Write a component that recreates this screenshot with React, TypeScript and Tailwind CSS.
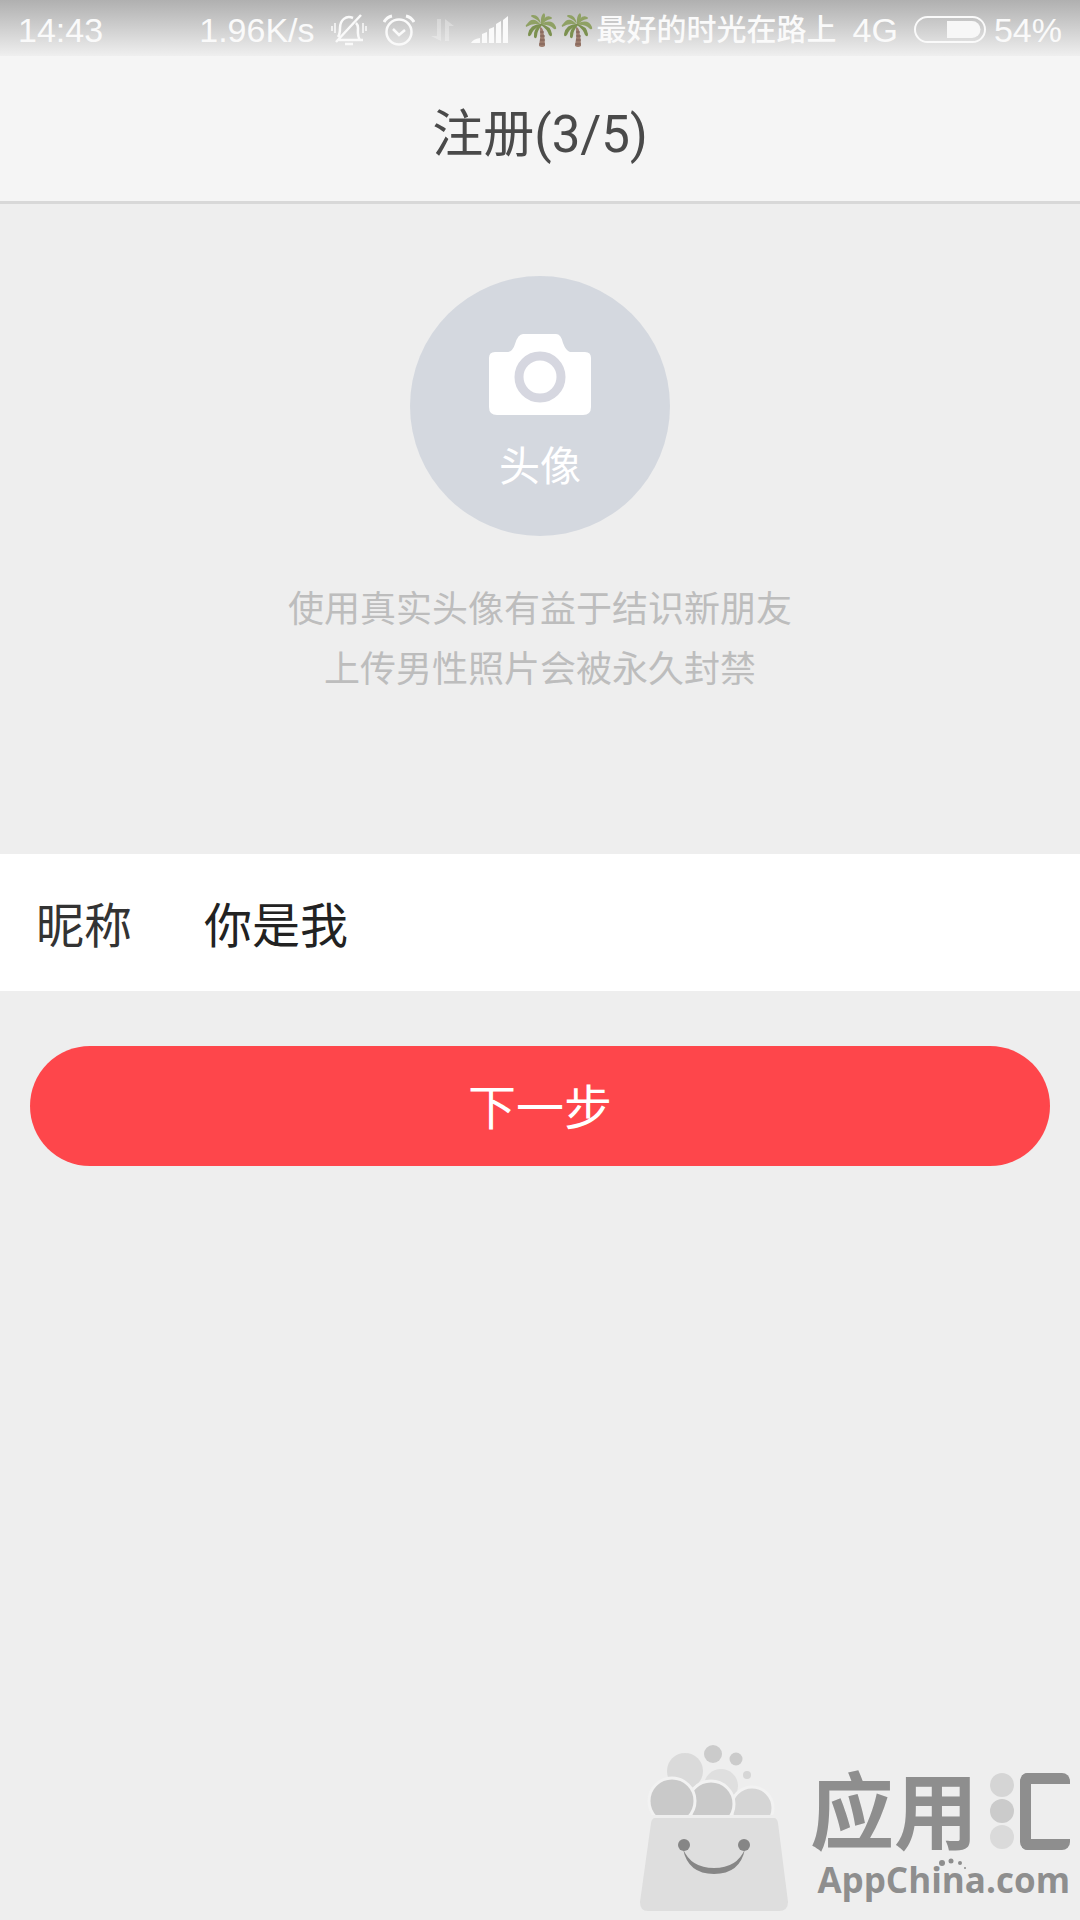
import React, { useState } from 'react';

const PalmIcon = () => (
    <svg viewBox="0 0 32 36" className="w-8 h-9" aria-hidden="true">
        <path d="M15 15 Q17 15 18 18 Q20 26 20 34 Q17 36 14 34 Q16 25 15 15Z" fill="#9c7b6c" />
        <path d="M15 20h4M15 24h5M15 28h5M14 32h6" stroke="#7d5f55" strokeWidth="1" />
        <g fill="#8fa164">
            <path d="M16 13 Q8 3 2 12 Q0 13 1 15 Q9 10 16 13Z" />
            <path d="M16 12 Q14 2 7 3 Q5 4 7 5 Q12 7 16 12Z" />
            <path d="M16 12 Q15 4 19 1 Q22 4 17 12Z" />
            <path d="M16 12 Q20 2 26 5 Q28 6 26 7 Q20 8 17 13Z" />
            <path d="M16 12 Q27 6 31 15 Q32 18 29 17 Q24 12 16 13Z" />
        </g>
        <g fill="#7c9150">
            <path d="M16 12 Q5 12 3 22 Q3 26 6 23 Q8 17 16 13Z" />
            <path d="M16 12 Q8 17 9 25 Q11 28 12 24 Q12 19 17 13Z" />
            <path d="M16 12 Q26 14 27 22 Q27 26 24 23 Q22 17 16 13Z" />
        </g>
    </svg>
);

const BellOffIcon = () => (
    <svg viewBox="0 0 36 32" className="w-9 h-8" fill="none" stroke="#fafafa" strokeWidth="2.500" aria-hidden="true">
        <path d="M7 26h25M29 26c-3-4-2-8-2-12 0-2-1-4-2-5M22 4C15 1 9 6 9 14c0 4 0 6-2 9M30 1L5 28" />
        <path d="M14 30h8" />
        <path d="M1 12v5M4 9v10M32 9v10M35 12v5" strokeWidth="1.5" />
    </svg>
);

const AlarmIcon = () => (
    <svg viewBox="0 0 32 32" className="w-8 h-8" fill="none" stroke="#fafafa" strokeWidth="2.5" aria-hidden="true">
        <circle cx="16" cy="18" r="12.5" />
        <path d="M10 15l6 6 6-5" />
        <path d="M1 8Q4 3 9 2M31 8Q28 3 23 2" strokeWidth="3" />
    </svg>
);

const DataArrowsIcon = () => (
    <svg viewBox="0 0 24 24" className="w-6 h-6" fill="#fff" opacity="0.3" aria-hidden="true">
        <path d="M6 1h4v22L0 18h6zM14 23V1l9 7h-5v15z" />
    </svg>
);

const SignalIcon = () => (
    <svg viewBox="0 0 38 28" className="w-[38px] h-7" fill="#fafafa" aria-hidden="true">
        <path d="M0 27Q2 23 9 22V27zM11 18l5-2v11h-5zM18 13l5-2v16h-5zM25 8l5-3v22h-5zM32 4l5-4v27h-5z" />
    </svg>
);

const BatteryIcon = () => (
    <svg viewBox="0 0 72 28" className="w-[72px] h-7" aria-hidden="true">
        <rect x="1" y="1" width="70" height="25" rx="12.5" fill="none" stroke="#fafafa" strokeWidth="2" />
        <path d="M33 5h25a8.500 8.500 0 0 1 0 17H33z" fill="#f7f7f7" />
    </svg>
);

const CameraIcon = () => (
    <svg viewBox="0 0 104 84" className="w-[104px] h-[84px]" aria-hidden="true">
        <path
            d="M7 19H20Q25 18 27 11Q30 1 35 1H68Q73 1 75 10Q78 18 82 19H97Q103 19 103 25V74Q103 82 95 82H9Q1 82 1 74V25Q1 19 7 19Z"
            fill="#fff"
        />
        <circle cx="52" cy="44" r="21" fill="none" stroke="#d6d7e0" strokeWidth="9" />
    </svg>
);

const BagIcon = () => (
    <svg viewBox="0 0 150 168" className="w-[150px] h-[168px]" aria-hidden="true">
        <circle cx="45" cy="27" r="18" fill="#dadada" />
        <circle cx="73" cy="10" r="9" fill="#cbcbcb" />
        <circle cx="96" cy="15" r="6.500" fill="#cbcbcb" />
        <circle cx="107" cy="31" r="4" fill="#d6d6d6" />
        <circle cx="81" cy="42" r="17" fill="#dfdfdf" />
        <circle cx="112" cy="64" r="21" fill="#d5d5d5" stroke="#f2f2f2" strokeWidth="3" />
        <circle cx="71" cy="60" r="23" fill="#c9c9c9" stroke="#f2f2f2" strokeWidth="3" />
        <circle cx="32" cy="57" r="23" fill="#c9c9c9" stroke="#f2f2f2" strokeWidth="3" />
        <path d="M0 71H150V168H0Z" fill="#eee" />
        <path d="M15 74H134Q137 74 138 79L148 158Q148 167 139 167H8Q0 167 0 158L11 79Q12 74 15 74Z" fill="#dedede" />
        <circle cx="44" cy="101" r="6" fill="#868686" />
        <circle cx="104" cy="101" r="6" fill="#868686" />
        <path d="M43 105Q51 124 74 124Q97 124 105 105Q100 130 74 130Q48 130 43 105Z" fill="#868686" />
    </svg>
);

const StatusBar = () => (
    <div className="flex h-14 items-center justify-between bg-linear-to-b from-[#b0b0b0] to-[#efefef] px-[18px] pt-1 font-['Liberation_Sans','Noto_Sans_CJK_SC',sans-serif] text-[34px] leading-none text-[#fafafa]">
        <span>14:43</span>
        <div className="flex items-center gap-4">
            <span>1.96K/s</span>
            <BellOffIcon />
            <AlarmIcon />
            <DataArrowsIcon />
            <SignalIcon />
            <div className="flex items-center gap-1">
                <PalmIcon />
                <PalmIcon />
                <span className="text-[30px] font-medium">最好的时光在路上</span>
            </div>
            <span>4G</span>
            <div className="flex items-center gap-2">
                <BatteryIcon />
                <span>54%</span>
            </div>
        </div>
    </div>
);

const Watermark = () => (
    <footer className="mt-auto flex items-end justify-end gap-5 pr-2.5 pb-2">
        <BagIcon />
        <div className="flex flex-col pb-2.5 text-[#8e8e8e]">
            <div className="flex items-center gap-3">
                <span className="pb-2 font-['Noto_Sans_CJK_SC',sans-serif] text-[84px] leading-[86px] font-bold">应用</span>
                <div role="img" aria-label="汇" className="flex items-center gap-1.5">
                    <div className="flex flex-col gap-0.5">
                        <span className="size-6 rounded-full bg-[#d5d5d5]" />
                        <span className="size-6 rounded-full bg-[#cbcbcb]" />
                        <span className="size-6 rounded-full bg-[#dadada]" />
                    </div>
                    <span className="h-[77px] w-[50px] rounded-lg border-[11px] border-r-0 border-[#8e8e8e]" />
                </div>
            </div>
            <div className="relative self-end font-['Open_Sans',sans-serif] text-[35px] leading-[44px] font-bold">
                AppChina.com
                <svg viewBox="0 0 40 14" className="absolute top-0 left-30 h-3.5 w-10" fill="#8e8e8e" aria-hidden="true">
                    <circle cx="5" cy="5" r="3" />
                    <circle cx="14" cy="3" r="2.500" />
                    <circle cx="23" cy="5" r="2" />
                    <circle cx="28" cy="10" r="1" />
                </svg>
            </div>
        </div>
    </footer>
);

const App: React.FC = () => {
    const [nickname, setNickname] = useState('你是我');

    const handleSubmit = (e: React.FormEvent) => {
        e.preventDefault();
    };

    return (
        <div className="flex min-h-screen flex-col bg-[#eeeeee] font-[Roboto,'Noto_Sans_CJK_SC',sans-serif]">
            <StatusBar />
            <header className="border-b-3 border-[#d8d8d8] bg-[#f5f5f5] pt-[41px] pb-7">
                <h1 className="text-center text-[51px] leading-[76px] text-[#4a4a4a]">注册(3/5)</h1>
            </header>

            <form onSubmit={handleSubmit}>
                <div className="flex flex-col items-center pt-[72px] pb-[154px]">
                    <button
                        type="button"
                        className="flex size-[260px] flex-col items-center rounded-full bg-[#d4d8df] pt-[57px] text-[41px] leading-[60px] text-white"
                    >
                        <CameraIcon />
                        <span className="pt-5">头像</span>
                    </button>
                    <p className="pt-11 text-center text-4xl leading-[60px] text-[#bdbdbd]">
                        使用真实头像有益于结识新朋友
                        <br />
                        上传男性照片会被永久封禁
                    </p>
                </div>

                <div className="flex h-[137px] items-center bg-white px-9 pt-2 text-5xl leading-[72px] text-[#222]">
                    <label htmlFor="nickname" className="w-[168px] shrink-0 text-[#333]">
                        昵称
                    </label>
                    <input
                        id="nickname"
                        type="text"
                        name="nickname"
                        value={nickname}
                        onChange={(e) => setNickname(e.target.value)}
                        className="min-w-0 flex-1 bg-transparent outline-none"
                    />
                </div>

                <div className="px-[30px] pt-[55px]">
                    <button type="submit" className="h-[120px] w-full rounded-full bg-[#fe464b] pt-1.5 text-5xl text-white">
                        下一步
                    </button>
                </div>
            </form>

            <Watermark />
        </div>
    );
};

export default App;
